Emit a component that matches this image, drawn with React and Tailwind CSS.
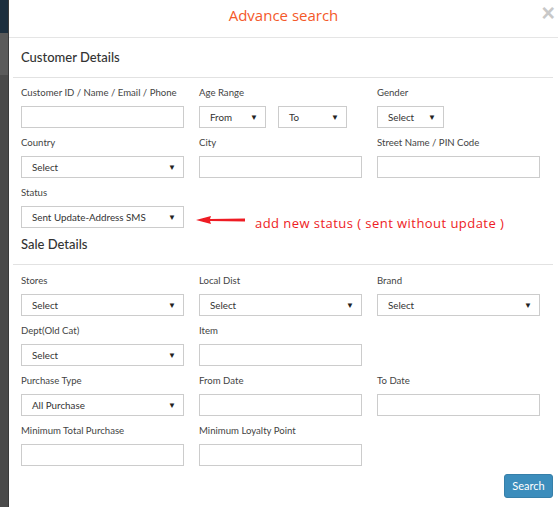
import React from 'react'

const Label = ({ children }) => (
  <div className="h-[20px] leading-[22px] text-[9.6px] text-[#444] whitespace-nowrap">{children}</div>
)

const Input = () => (
  <div className="mt-[4px] h-[22px] border border-[#cccccc] bg-white"></div>
)

const Select = ({ value, className = 'w-full' }) => (
  <div className={`mt-[4px] h-[22px] border border-[#cccccc] bg-white flex items-center justify-between pl-[10px] pr-[7px] text-[9.8px] text-[#333] ${className}`}>
    <span>{value}</span>
    <span className="text-[8px] text-[#222]">▼</span>
  </div>
)

const Field = ({ label, children }) => (
  <div className="flex flex-col">
    <Label>{label}</Label>
    {children}
  </div>
)

const SectionTitle = ({ children, className }) => (
  <div className={`pl-[8px] h-[18px] leading-[18px] text-[13px] font-medium text-[#333] ${className}`}>{children}</div>
)

const App = () => {
  return (
    <div className="w-[560px] h-[507px] flex bg-white overflow-hidden font-[Lato,sans-serif]">
      <div className="w-[8px] flex flex-col shrink-0">
        <div className="h-[33px] bg-[#1d2f3e]"></div>
        <div className="h-[42px] bg-[#5a5a5a]"></div>
        <div className="flex-1 bg-[#4a4a4a]"></div>
      </div>
      <div className="w-[550px] flex flex-col bg-white border-l border-[#3a3a3a]">
        <div className="h-[38px] border-b border-[#e5e5e5] flex items-center justify-center relative">
          <h1 className="text-[15px] text-[#f4592a] -mt-[7px] font-['Open_Sans',sans-serif]">Advance search</h1>
          <span className="absolute right-[3px] top-[-4px] text-[23px] font-bold text-[#c8c8c8] font-[Arial,sans-serif]">×</span>
        </div>

        <div className="pl-[4px] pr-[5px]">
          <SectionTitle className="mt-[10px]">Customer Details</SectionTitle>
          <div className="mt-[11px] border-t border-[#e2e2e2]"></div>
          <div className="pl-[8px] pt-[4px] grid grid-cols-[163px_163px_163px] gap-x-[15px] gap-y-[4px]">
            <Field label="Customer ID / Name / Email / Phone"><Input /></Field>
            <Field label="Age Range">
              <div className="flex gap-[12px]">
                <Select value="From" className="w-[67px]" />
                <Select value="To" className="w-[69px]" />
              </div>
            </Field>
            <Field label="Gender"><Select value="Select" className="w-[67px]" /></Field>

            <Field label="Country"><Select value="Select" /></Field>
            <Field label="City"><Input /></Field>
            <Field label="Street Name / PIN Code"><Input /></Field>

            <Field label="Status"><Select value="Sent Update-Address SMS" /></Field>
            <div className="col-span-2 pt-[24px] -ml-[3px] flex items-start gap-[9px] h-[46px]">
              <svg width="50" height="10" viewBox="0 0 50 10" className="shrink-0 mt-[9px]">
                <polygon points="0,5 15,1 14,4 49,3.5 49,6.5 14,6 15,9" fill="#ee1c24" />
              </svg>
              <span className="leading-[18px] mt-[7.5px] text-[13px] text-[#ee1c24] tracking-[0.45px] font-['Open_Sans',sans-serif] whitespace-nowrap">add new status ( sent without update )</span>
            </div>
          </div>

          <SectionTitle className="mt-[7px]">Sale Details</SectionTitle>
          <div className="mt-[11px] border-t border-[#e2e2e2]"></div>
          <div className="pl-[8px] pt-[5px] grid grid-cols-[163px_163px_163px] gap-x-[15px] gap-y-[4px]">
            <Field label="Stores"><Select value="Select" /></Field>
            <Field label="Local Dist"><Select value="Select" /></Field>
            <Field label="Brand"><Select value="Select" /></Field>

            <Field label="Dept(Old Cat)"><Select value="Select" /></Field>
            <Field label="Item"><Input /></Field>
            <div></div>

            <Field label="Purchase Type"><Select value="All Purchase" /></Field>
            <Field label="From Date"><Input /></Field>
            <Field label="To Date"><Input /></Field>

            <Field label="Minimum Total Purchase"><Input /></Field>
            <Field label="Minimum Loyalty Point"><Input /></Field>
            <div></div>
          </div>

          <div className="mt-[8px] flex justify-end">
            <button className="w-[49px] h-[24px] rounded-[3px] bg-[#3c8dbc] border border-[#367fa9] text-white text-[11px]">Search</button>
          </div>
        </div>
      </div>
    </div>
  )
}

export default App
